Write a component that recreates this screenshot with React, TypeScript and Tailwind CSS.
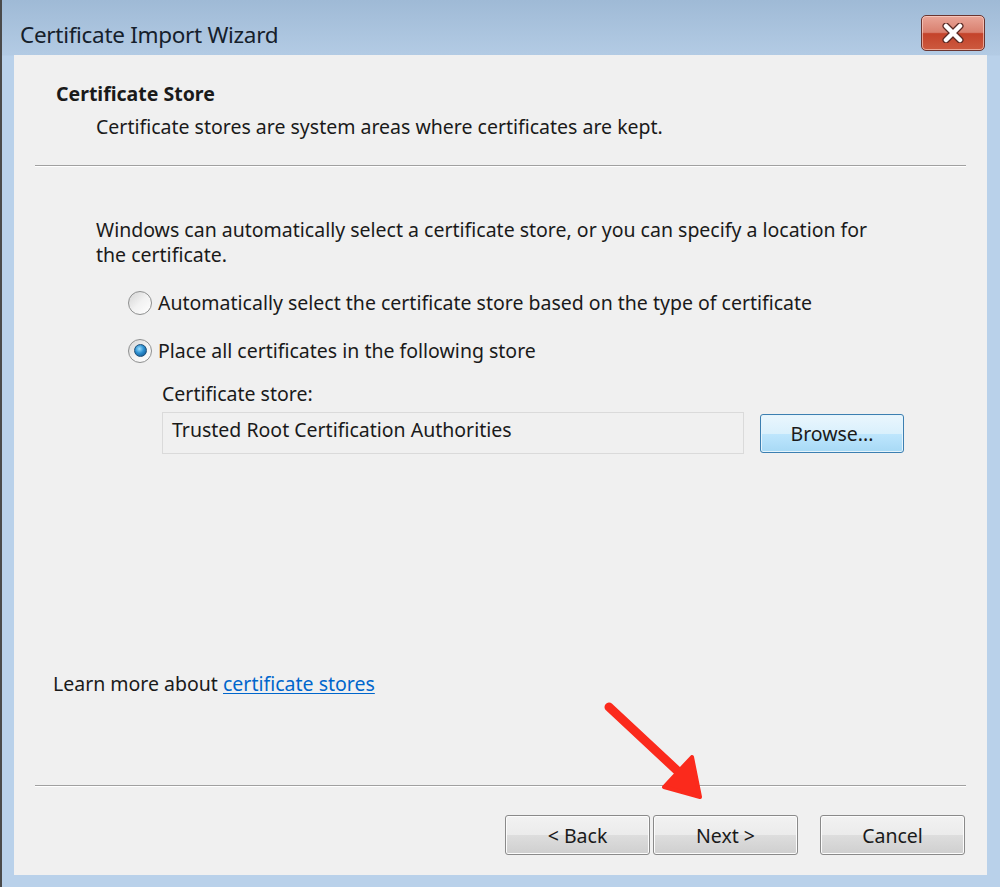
import React, { useState } from "react";

const font = { fontFamily: '"Noto Sans", "Open Sans", sans-serif' };

function Radio({ checked, onClick }: { checked: boolean; onClick: () => void }) {
  return (
    <button
      onClick={onClick}
      className="w-[24px] h-[24px] rounded-full border border-[#8e8f8f] bg-gradient-to-br from-[#d4d4d4] via-[#f2f2f2] to-white flex items-center justify-center shrink-0"
    >
      {checked && (
        <span className="w-[13px] h-[13px] rounded-full border border-[#1d4f78] bg-[radial-gradient(circle_at_40%_35%,#9fe0ff_0%,#2c8fd0_45%,#0d4c85_100%)]" />
      )}
    </button>
  );
}

function WinButton({ children, className = "" }: { children: React.ReactNode; className?: string }) {
  return (
    <button
      className={`h-[40px] rounded-[3px] border border-[#8a8a8a] bg-[linear-gradient(to_bottom,#f2f2f2_0%,#ebebeb_50%,#dddddd_51%,#cfcfcf_100%)] text-[19.5px] text-[#1a1a1a] shadow-[inset_0_0_0_1px_#fcfcfc] ${className}`}
    >
      {children}
    </button>
  );
}

export default function App() {
  const [auto, setAuto] = useState(false);

  return (
    <div
      className="relative w-[1000px] h-[887px] flex flex-col border-l-2 border-[#4a4a4a] bg-[linear-gradient(to_bottom,#9fbad6_0px,#b3cbe4_55px,#b9d1ea_56px,#b9d1ea_100%)] overflow-hidden"
      style={font}
    >
      {/* Title bar */}
      <div className="h-[55px] flex items-start justify-between pl-[18px] pr-[15px]">
        <div className="mt-[20px] text-[22.5px] leading-[30px] text-[#15202b] tracking-[-0.3px]">
          Certificate Import Wizard
        </div>
        <button className="mt-[15px] w-[64px] h-[36px] rounded-[5px] border border-[#6a3530] bg-[linear-gradient(to_bottom,#e9a598_0%,#d9806f_48%,#c4432b_52%,#cc5a3f_100%)] shadow-[inset_0_0_0_1px_rgba(255,220,210,0.6)] flex items-center justify-center">
          <svg width="24" height="20" viewBox="0 0 24 20">
            <path d="M5 3 L19 17 M19 3 L5 17" stroke="#5a2a24" strokeWidth="7" strokeLinecap="round" />
            <path d="M5 3 L19 17 M19 3 L5 17" stroke="#ffffff" strokeWidth="4.5" strokeLinecap="round" />
          </svg>
        </button>
      </div>

      {/* Content panel */}
      <div className="ml-[12px] mr-[13px] h-[820px] bg-[#f0f0f0] flex flex-col text-[19.5px] leading-[25px] text-[#1a1a1a]">
        <div className="pt-[26px] pl-[42px] font-bold">Certificate Store</div>
        <div className="mt-[8px] pl-[82px]">
          Certificate stores are system areas where certificates are kept.
        </div>
        <div className="mt-[26px] mx-[21px] border-t border-[#a0a0a0] border-b border-b-white" />

        <div className="mt-[50px] pl-[82px] pr-[95px]">
          Windows can automatically select a certificate store, or you can specify a location for the certificate.
        </div>

        <div className="mt-[23px] pl-[114px] flex items-center gap-[6px]">
          <Radio checked={auto} onClick={() => setAuto(true)} />
          <span>Automatically select the certificate store based on the type of certificate</span>
        </div>
        <div className="mt-[23px] pl-[114px] flex items-center gap-[6px]">
          <Radio checked={!auto} onClick={() => setAuto(false)} />
          <span>Place all certificates in the following store</span>
        </div>

        <div className="mt-[18px] pl-[148px]">Certificate store:</div>
        <div className="mt-[6px] pl-[148px] flex items-center gap-[16px]">
          <div className="w-[582px] h-[42px] border border-[#dadada] bg-[#f0f0f0] pl-[9px] pt-[4px] text-[#1a1a1a]">
            Trusted Root Certification Authorities
          </div>
          <button className="w-[144px] h-[39px] rounded-[3px] border border-[#3c7fb1] bg-[linear-gradient(to_bottom,#eaf6fd_0%,#d9f0fc_50%,#bee6fd_51%,#a7d9f5_100%)] shadow-[inset_0_0_0_1px_#e5f4fc] text-[19.5px] text-[#1a1a1a]">
            Browse...
          </button>
        </div>

        <div className="mt-[217px] pl-[39px]">
          Learn more about{" "}
          <a href="#" className="text-[#0066cc] underline underline-offset-2">
            certificate stores
          </a>
        </div>

        <div className="mt-[89px] mx-[21px] border-t border-[#a0a0a0] border-b border-b-white" />

        <div className="mt-[28px] flex pl-[491px]">
          <WinButton className="w-[145px]">&lt; Back</WinButton>
          <WinButton className="w-[145px] ml-[3px]">Next &gt;</WinButton>
          <WinButton className="w-[145px] ml-[22px]">Cancel</WinButton>
        </div>
      </div>

      {/* Red annotation arrow */}
      <svg className="absolute left-0 top-0 pointer-events-none" width="1000" height="887" viewBox="0 0 1000 887">
        <path d="M607 707 L681 776" stroke="#fb2a1c" strokeWidth="9" strokeLinecap="round" />
        <polygon points="690,757 662,787 698,797" fill="#fb2a1c" stroke="#fb2a1c" strokeWidth="4" strokeLinejoin="round" />
      </svg>
    </div>
  );
}
